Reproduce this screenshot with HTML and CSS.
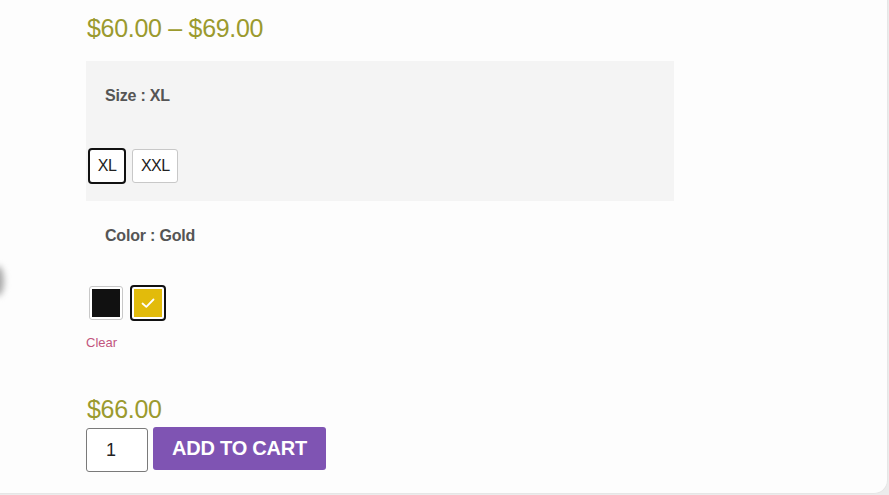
FILE: index.html
```html
<!DOCTYPE html>
<html>
<head>
<meta charset="utf-8">
<link rel="stylesheet" href="styles.css">
</head>
<body>
<div class="card">
  <div class="blur-img"></div>
  <div class="summary">
    <p class="price-range">$60.00 – $69.00</p>
    <div class="variations">
      <div class="var-label">Size : XL</div>
      <div class="var-options">
        <span class="size-btn selected">XL</span>
        <span class="size-btn">XXL</span>
      </div>
    </div>
    <div class="variations plain">
      <div class="var-label">Color : Gold</div>
      <div class="var-options swatches">
        <span class="swatch"><span class="fill black"></span></span>
        <span class="swatch selected"><span class="fill gold">
          <svg viewBox="0 0 20 20" width="20" height="20"><path d="M4.5 10.5l3.8 3.4 7.2-7.4" fill="none" stroke="#fff" stroke-width="1.8" stroke-linecap="round" stroke-linejoin="round"/></svg>
        </span></span>
      </div>
      <a class="clear">Clear</a>
    </div>
    <p class="price">$66.00</p>
    <div class="cart-row">
      <div class="qty">1</div>
      <button class="add-btn">ADD TO CART</button>
    </div>
  </div>
</div>
</body>
</html>
```
FILE: styles.css
```css
html, body {
  margin: 0;
  padding: 0;
  background: #ececec;
}
body {
  font-family: "Liberation Sans", Arial, sans-serif;
  width: 889px;
  height: 495px;
  overflow: hidden;
}
.card {
  position: relative;
  width: 888px;
  height: 494px;
  box-sizing: border-box;
  background: #fdfdfd;
  border-right: 1px solid #e6e6e6;
  border-bottom: 1px solid #e6e6e6;
  border-radius: 0 0 14px 0;
  overflow: hidden;
}
.blur-img {
  position: absolute;
  left: -8px;
  top: 266px;
  width: 12px;
  height: 30px;
  background: #a8a8a8;
  border-radius: 50%;
  filter: blur(3px);
}
.summary {
  padding-left: 86px;
  padding-top: 13px;
}
.price-range, .price {
  margin: 0;
  font-size: 25px;
  line-height: 30px;
  color: #9b9a2e;
  letter-spacing: -0.3px;
  padding-left: 1px;
}
.variations {
  margin-top: 18px;
  width: 588px;
  height: 140px;
  background: #f4f4f4;
  box-sizing: border-box;
  padding-top: 25px;
}
.variations.plain {
  background: transparent;
  margin-top: 0;
  height: auto;
  padding-top: 25px;
}
.var-label {
  padding-left: 19px;
  font-size: 16px;
  font-weight: bold;
  color: #555;
  line-height: 20px;
  letter-spacing: -0.2px;
}
.var-options {
  display: flex;
  gap: 6px;
  margin-top: 42px;
  padding-left: 2px;
}
.size-btn {
  box-sizing: border-box;
  height: 34px;
  margin-top: 1px;
  padding: 0 8px;
  display: flex;
  align-items: center;
  justify-content: center;
  font-size: 16px;
  color: #222;
  background: #fff;
  border: 1px solid #c8c8c8;
  border-radius: 3px;
  letter-spacing: -0.6px;
}
.size-btn.selected {
  height: 36px;
  margin-top: 0;
  width: 38px;
  padding: 0;
  border: 2px solid #111;
  border-radius: 4px;
}
.swatches {
  gap: 7px;
  margin-top: 39px;
  padding-left: 3px;
  align-items: center;
}
.swatch {
  box-sizing: border-box;
  width: 34px;
  height: 34px;
  padding: 2px;
  border: 1px solid #c8c8c8;
  border-radius: 3px;
  background: #fff;
  display: flex;
}
.swatch.selected {
  width: 36px;
  height: 36px;
  border: 2px solid #111;
  border-radius: 4px;
}
.fill {
  flex: 1;
  display: flex;
  align-items: center;
  justify-content: center;
}
.fill.black { background: #111; }
.fill.gold { background: #e2bb0b; }
.clear {
  display: block;
  margin-top: 14px;
  font-size: 13px;
  line-height: 16px;
  color: #c2557e;
}
.price {
  margin-top: 43px;
}
.cart-row {
  display: flex;
  gap: 5px;
  margin-top: 3px;
  align-items: flex-start;
}
.qty {
  box-sizing: border-box;
  width: 62px;
  height: 44px;
  border: 1px solid #7a7a7a;
  border-radius: 3px;
  background: #fff;
  font-size: 18px;
  color: #222;
  display: flex;
  align-items: center;
  padding-left: 19px;
  margin-top: 1px;
}
.add-btn {
  box-sizing: border-box;
  width: 173px;
  height: 43px;
  border: none;
  border-radius: 3px;
  background: #7f54b3;
  color: #fff;
  font-family: "Liberation Sans", Arial, sans-serif;
  font-weight: bold;
  font-size: 20px;
  letter-spacing: -0.2px;
  padding: 0;
}
```
